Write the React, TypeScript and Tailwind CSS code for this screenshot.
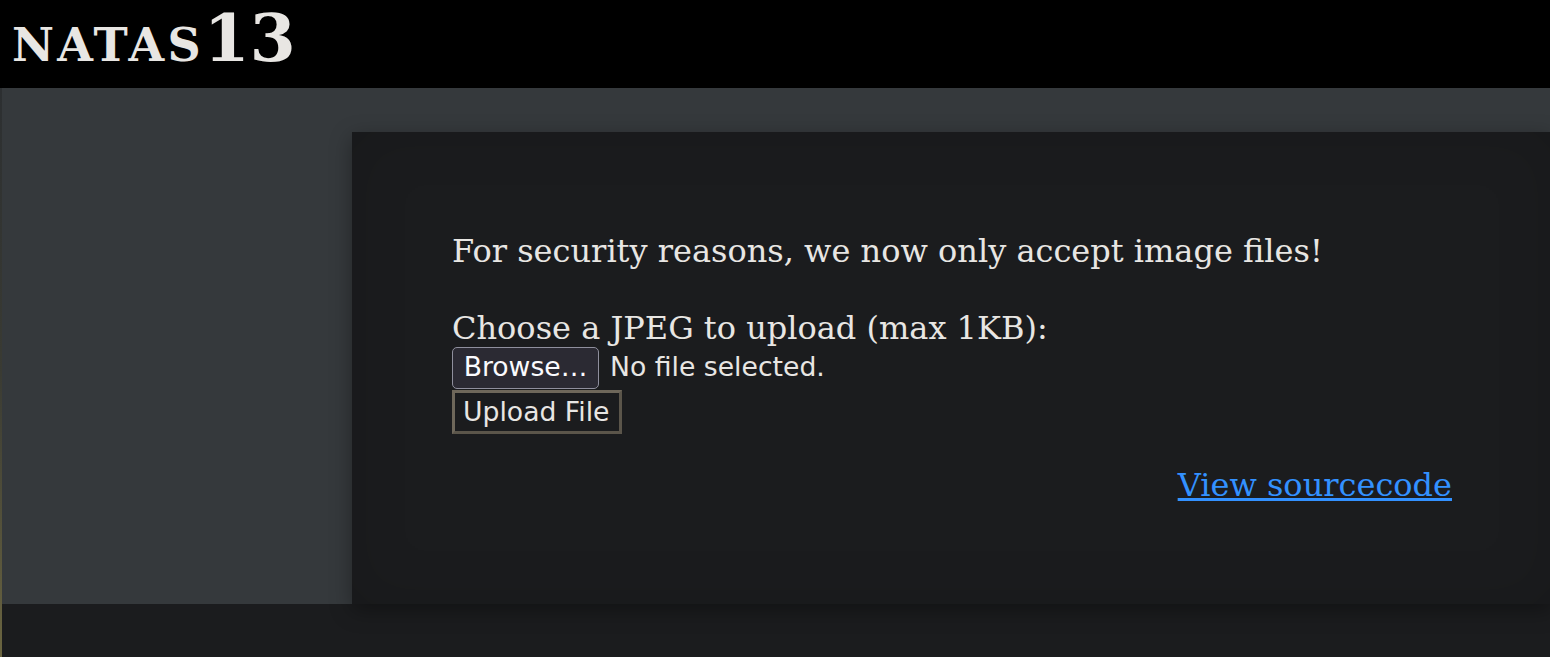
import React from 'react';

const serif = { fontFamily: '"DejaVu Serif", "Liberation Serif", serif' };
const sans = { fontFamily: '"DejaVu Sans", "Liberation Sans", sans-serif' };

const App = () => {
  return (
    <div className="relative min-h-screen w-full overflow-hidden bg-[#1b1c1e] text-[#e8e6e3]" style={serif}>
      {/* thin background strip at the window edge */}
      <div className="absolute left-0 top-[88px] bottom-0 w-[2px] bg-gradient-to-b from-[#2c2f31] via-[#3a3b33] to-[#6b6540]" />

      <header className="h-[88px] bg-black pl-[12px]">
        <h1 className="text-[66px] font-bold leading-[76px] [font-variant:small-caps]">
          <span className="tracking-[3.2px]">natas</span>13
        </h1>
      </header>

      <div className="bg-[#35393c] pt-[44px]">
        <div className="ml-[352px] w-[1200px] bg-[#1b1c1e] p-[100px] text-[32px] leading-[38.5px] shadow-[0_6px_20px_rgba(0,0,0,0.35),inset_0_0_60px_rgba(0,0,0,0.12)]">
          <form className="mb-[32px]">
            For security reasons, we now only accept image files!
            <br />
            <br />
            Choose a JPEG to upload (max 1KB):
            <br />
            <div className="-mt-[1px] flex items-center gap-[11px] text-[26.67px] leading-none" style={sans}>
              <button
                type="button"
                className="h-[42px] w-[147px] rounded-[5px] border border-[#8f8f9d] bg-[#2b2a33] text-[#fbfbfe]"
              >
                Browse…
              </button>
              <span>No file selected.</span>
            </div>
            <button
              type="button"
              className="mt-[1px] block h-[44px] w-[170px] border-[3px] border-[#5b554a] border-t-[#6e675a] border-l-[#6e675a] bg-[#1b1c1e] pl-[8px] pt-[1px] text-left text-[26.67px] leading-none text-[#e8e6e3]"
              style={sans}
            >
              Upload File
            </button>
          </form>
          <div className="text-right">
            <a href="#" className="text-[#3391ff] underline">
              View sourcecode
            </a>
          </div>
        </div>
      </div>
    </div>
  );
};

export default App;
